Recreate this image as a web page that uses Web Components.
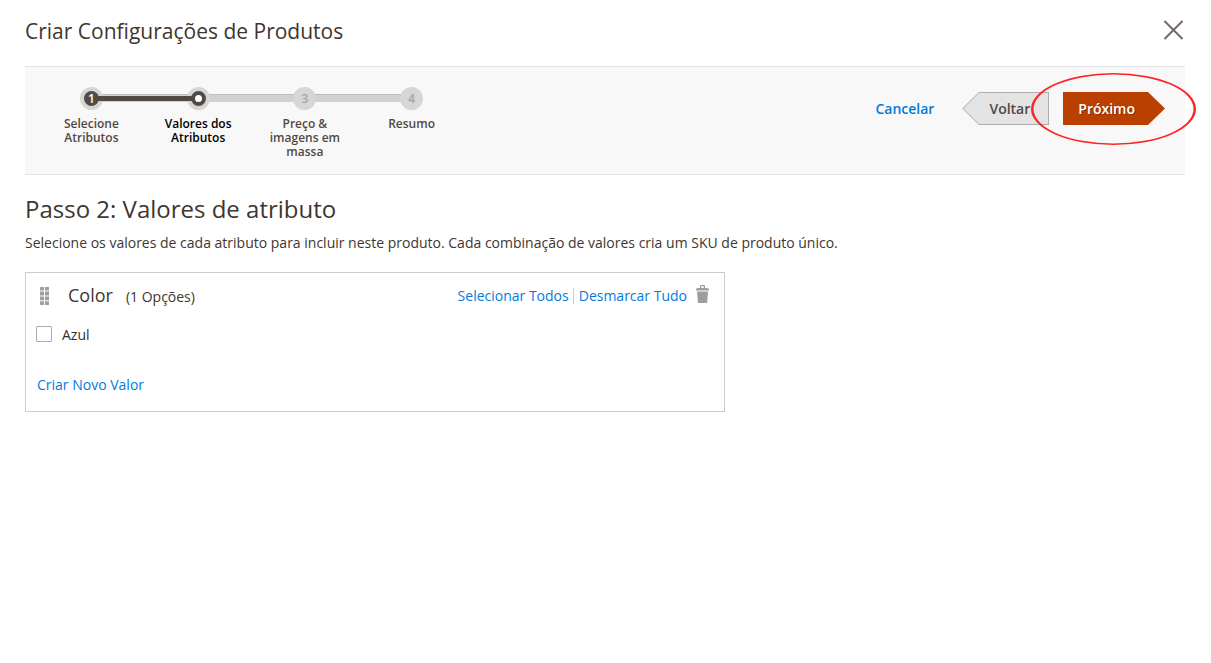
<!DOCTYPE html>
<html lang="pt-BR">
<head>
<meta charset="utf-8">
<meta name="viewport" content="width=device-width, initial-scale=1">
<title>Criar Configurações de Produtos</title>
<style>
  html, body { margin: 0; background: #fff; }
  body { font: 14px/20px "Open Sans", "Noto Sans", sans-serif; color: #41362f; }
</style>
</head>
<body>
<product-wizard heading="Criar Configurações de Produtos">
  <wizard-bar slot="bar">
    <wizard-steps slot="steps">
      <wizard-step state="done" number="1">Selecione Atributos</wizard-step>
      <wizard-step state="current" number="2">Valores dos Atributos</wizard-step>
      <wizard-step number="3">Preço &amp; imagens em massa</wizard-step>
      <wizard-step number="4">Resumo</wizard-step>
    </wizard-steps>
    <wizard-button kind="link">Cancelar</wizard-button>
    <wizard-button kind="back">Voltar</wizard-button>
    <wizard-button kind="next" marked>Próximo</wizard-button>
  </wizard-bar>
  <step-intro>
    <span slot="title">Passo 2: Valores de atributo</span>
    Selecione os valores de cada atributo para incluir neste produto. Cada combinação de valores cria um SKU de produto único.
  </step-intro>
  <attribute-card name="Color" count="(1 Opções)">
    <attribute-option>Azul</attribute-option>
  </attribute-card>
</product-wizard>

<script>
function define(tag, html) {
  const tpl = document.createElement('template');
  tpl.innerHTML = html;
  customElements.define(tag, class extends HTMLElement {
    constructor() {
      super();
      this.attachShadow({ mode: 'open' }).append(tpl.content.cloneNode(true));
      this.shadowRoot.querySelectorAll('[data-attr]').forEach(el => {
        el.textContent = this.getAttribute(el.dataset.attr);
      });
    }
  });
}

define('product-wizard', `
  <style>
    :host { display: block; padding: 0 26px 24px 25px; }
    header { display: flex; align-items: center; justify-content: space-between; height: 66px; }
    h1 { margin: 0; padding-bottom: 4px; font-size: 21px; line-height: 30px; font-weight: 400; }
    button { display: flex; margin: 0 0 6px; padding: 0; border: 0; background: none; cursor: pointer; }
    svg { width: 23px; height: 22px; }
  </style>
  <header>
    <h1 data-attr="heading"></h1>
    <button type="button" aria-label="Fechar">
      <svg viewBox="0 0 23 22" fill="none" stroke="#736963" stroke-width="2"><path d="M2.5 2 20.5 20M20.5 2 2.5 20"/></svg>
    </button>
  </header>
  <slot name="bar"></slot>
  <main><slot></slot></main>
`);

define('wizard-bar', `
  <style>
    :host { display: flex; justify-content: space-between; box-sizing: border-box; min-height: 109px;
            padding: 20px 20px 15px 13px; background: #f8f8f8; border: solid #e3e3e3; border-width: 1px 0; }
    .actions { display: flex; align-items: flex-start; gap: 14px; padding-top: 5px; }
  </style>
  <slot name="steps"></slot>
  <div class="actions"><slot></slot></div>
`);

define('wizard-steps', `
  <style>
    :host { display: block; flex: 0 1 427px; }
    nav { display: grid; grid-template-columns: repeat(4, 1fr); }
  </style>
  <nav aria-label="Etapas"><slot></slot></nav>
`);

define('wizard-step', `
  <style>
    :host { display: flex; flex-direction: column; align-items: center; gap: 7px; position: relative;
            font-size: 12px; line-height: 14px; font-weight: 600; text-align: center; color: #514943; }
    :host([state=current]) { color: #000; }
    .track { position: absolute; top: 7px; left: 50%; width: 100%; height: 8px; box-sizing: border-box;
             background: #d1d1d1; border-top: 1px solid #bcbcbc; }
    :host(:last-of-type) .track { display: none; }
    .dot { position: relative; z-index: 1; display: flex; align-items: center; justify-content: center;
           width: 23px; height: 23px; border-radius: 50%; background: #d6d6d6; color: #a6a6a6; }
    .mark { width: 15px; height: 15px; line-height: 15px; border-radius: 50%; box-sizing: border-box; }
    :host([state=done]) .mark { background: #514943; color: #fff; }
    :host([state=current]) .mark { border: 4px solid #514943; background: #fff; }
    .link { position: absolute; z-index: 2; top: 9px; left: 50%; width: 100%; height: 5px; display: none; background: #514943; }
    :host([state=done]) .link { display: block; width: calc(100% - 12px); margin-left: 6px; }
    .label { padding: 0 13px; }
  </style>
  <span class="track"></span><span class="link"></span>
  <span class="dot"><span class="mark" data-attr="number"></span></span>
  <span class="label"><slot></slot></span>
`);
document.querySelectorAll('wizard-step[state=current]').forEach(step => {
  step.shadowRoot.querySelector('.mark').textContent = '';
});

define('wizard-button', `
  <style>
    :host { display: block; position: relative; }
    button { display: flex; align-items: center; height: 33px; margin: 0; padding: 0; border: 0; background: none;
             font: 600 14px/20px "Open Sans", "Noto Sans", sans-serif; color: #514943; cursor: pointer; }
    svg { display: none; }
    .face { box-sizing: border-box; height: 33px; padding: 7px 0 6px; }
    :host([kind=link]) button { color: #007bdb; margin-right: 14px; }
    :host([kind=back]) .face { padding: 6px 18px 5px 10px; background: #e3e3e3; border: solid #adadad; border-width: 1px 1px 1px 0; }
    :host([kind=back]) .left { display: block; width: 17px; height: 33px; }
    :host([kind=next]) button { color: #fff; text-shadow: 1px 1px 0 rgba(0,0,0,.25); }
    :host([kind=next]) .face { padding: 7px 13px 6px 15px; background: #ba4000; }
    :host([kind=next]) .right { display: block; width: 17px; height: 33px; }
    :host([marked]) .ring { display: block; position: absolute; left: -33px; top: -20px; width: 167px; height: 75px; pointer-events: none; }
  </style>
  <button type="button">
    <svg class="left" viewBox="0 0 17 33"><path d="M17 .5 .7 16.5 17 32.5" fill="#e3e3e3" stroke="#adadad"/></svg>
    <span class="face"><slot></slot></span>
    <svg class="right" viewBox="0 0 17 33"><path d="M0 0 17 16.500 0 33z" fill="#ba4000"/></svg>
  </button>
  <svg class="ring" viewBox="0 0 167 75" fill="#f22" fill-rule="evenodd">
    <path d="M1 37a82.500 36 0 1 0 165 0a82.500 36 0 1 0-165 0zM3.500 37a80 34.500 0 1 0 160 0a80 34.500 0 1 0-160 0z"/>
  </svg>
`);

define('step-intro', `
  <style>
    :host { display: block; padding: 17px 0 19px; }
    h2 { margin: 0 0 8px; font-size: 24px; line-height: 33px; font-weight: 400; }
    p { margin: 0; }
  </style>
  <h2><slot name="title"></slot></h2>
  <p><slot></slot></p>
`);

define('attribute-card', `
  <style>
    :host { display: block; box-sizing: border-box; max-width: 700px; padding: 10px 14px 16px 10px; border: 1px solid #ccc; }
    header { display: flex; align-items: center; height: 26px; }
    .grip { width: 10px; height: 18px; margin: 0 18px 0 4px; fill: #9e9e9e; }
    .title { display: flex; align-items: baseline; gap: 13px; flex: 1; padding-bottom: 2px; }
    h3 { margin: 0; font-size: 18px; line-height: 26px; font-weight: 400; }
    a { color: #007bdb; text-decoration: none; }
    .tools { display: flex; align-items: center; }
    .tools a + a { margin-left: 4px; padding-left: 5px; border-left: 1px solid #ccc; line-height: 16px; }
    button { display: flex; margin: 0 0 4px 9px; padding: 0; border: 0; background: none; cursor: pointer; }
    .trash { width: 14px; height: 18px; fill: #9e9e9e; }
    .options { padding: 15px 0 29px; }
    .create { padding-left: 1px; }
  </style>
  <header>
    <svg class="grip" viewBox="0 0 10 18"><path d="M0 0h4v3.500H0zM5 0h4v3.500H5zM0 4.600h4v3.800H0zM5 4.600h4v3.800H5zM0 9.500h4v3.800H0zM5 9.500h4v3.800H5zM0 14.300h4V18H0zM5 14.300h4V18H5z"/></svg>
    <div class="title"><h3 data-attr="name"></h3><span data-attr="count"></span></div>
    <div class="tools">
      <a href="#all">Selecionar Todos</a><a href="#none">Desmarcar Tudo</a>
      <button type="button" aria-label="Remover atributo">
        <svg class="trash" viewBox="0 0 14 18"><path fill-rule="evenodd" d="M4 3V1q0-1 1-1h3q1 0 1 1v2h2q2 0 2 1.500V5.500H0V4.500Q0 3 2 3zM5.200 3h2.600V1.200H5.200zM1 6.500h11L11.200 18H2z"/></svg>
      </button>
    </div>
  </header>
  <div class="options"><slot></slot></div>
  <a class="create" href="#new">Criar Novo Valor</a>
`);

define('attribute-option', `
  <style>
    :host { display: block; color: #303030; }
    label { display: flex; align-items: center; gap: 10px; line-height: 22px; }
    input { appearance: none; width: 16px; height: 16px; margin: 0 0 2px; border: 1px solid #adadad; border-radius: 1px; background: #fff; }
    input:checked { background: #514943; }
  </style>
  <label><input type="checkbox"><span><slot></slot></span></label>
`);
</script>
</body>
</html>
